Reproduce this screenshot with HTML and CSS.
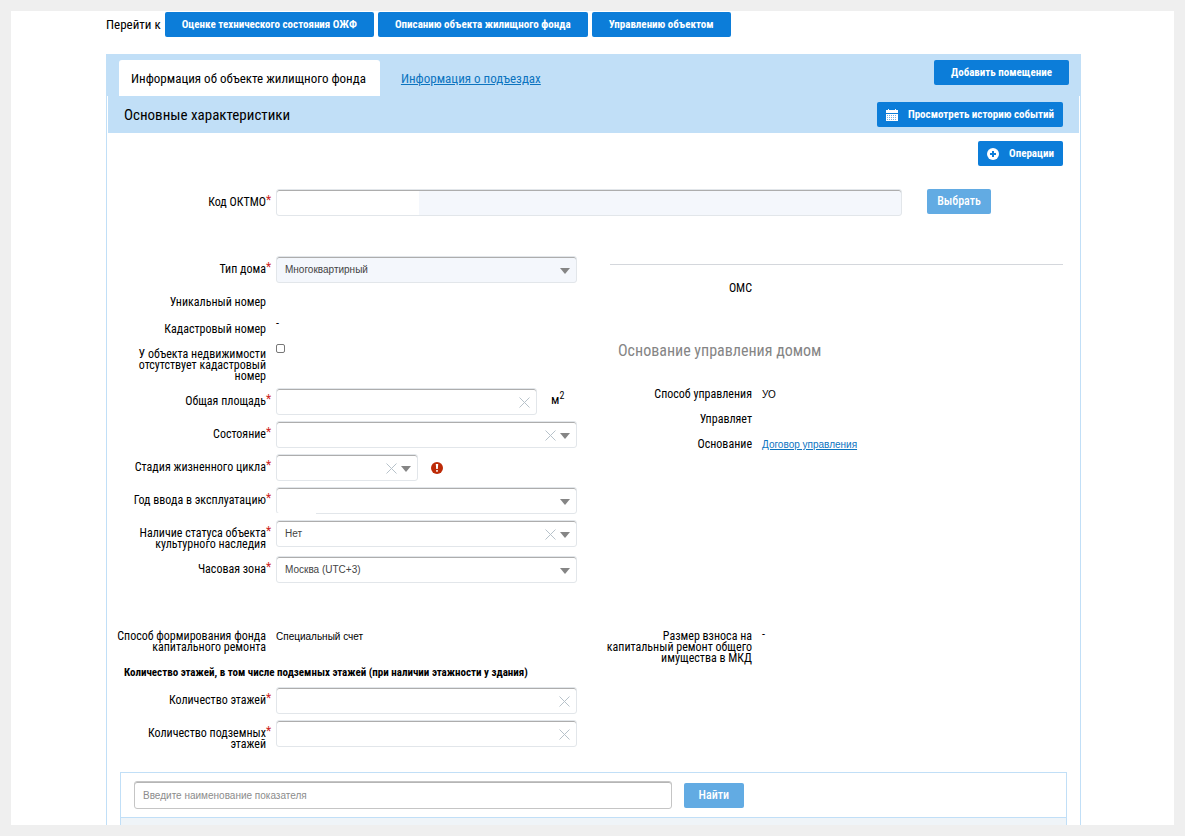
FILE: index.html
```html
<!DOCTYPE html>
<html lang="ru">
<head>
<meta charset="utf-8">
<title>Информация об объекте жилищного фонда</title>
<link rel="stylesheet" href="styles.css">
</head>
<body>
<svg width="0" height="0" class="sprite" aria-hidden="true">
  <symbol id="cross" viewBox="0 0 11 11"><path d="M.5.5l10 10M10.500.5l-10 10" fill="none" stroke="currentColor"/></symbol>
  <symbol id="arrow" viewBox="0 0 10 6"><path d="M0 0h10L5 6z" fill="currentColor"/></symbol>
</svg>
<main class="page">
  <nav class="jump">
    <span class="jump-label">Перейти к</span>
    <button class="btn">Оценке технического состояния ОЖФ</button>
    <button class="btn">Описанию объекта жилищного фонда</button>
    <button class="btn">Управлению объектом</button>
  </nav>
  <section class="panel">
    <div class="tabs">
      <span class="tab active">Информация об объекте жилищного фонда</span>
      <a class="tab" href="#">Информация о подъездах</a>
      <button class="btn push">Добавить помещение</button>
    </div>
    <div class="title-bar">
      <h1>Основные характеристики</h1>
      <button class="btn with-icon">
        <svg width="12" height="12" viewBox="0 0 12 12"><path d="M0 1h12v3H0zM0 5h12v7H0z" fill="#fff"/><path d="M2 0h1v2H2zM9 0h1v2H9z" fill="#fff"/><path d="M1 6.500h10M1 8.500h10M1 10.500h10" stroke="#0c7dd9" stroke-opacity=".6" stroke-dasharray="1 1"/></svg>
        Просмотреть историю событий
      </button>
    </div>
    <form class="content">
      <div class="operations">
        <button type="button" class="btn with-icon">
          <svg width="12" height="12" viewBox="0 0 12 12"><circle cx="6" cy="6" r="6" fill="#fff"/><path d="M6 3v6M3 6h6" stroke="#0c7dd9" stroke-width="2"/></svg>
          Операции
        </button>
      </div>
      <div class="row code-row">
        <label class="label" for="code"><span>Код ОКТМО</span><b>*</b></label>
        <input class="control code" id="code" disabled>
        <button type="button" class="btn pale choose">Выбрать</button>
      </div>
      <div class="columns">
        <div class="rows">
          <div class="row">
            <label class="label" for="type"><span>Тип дома</span><b>*</b></label>
            <div class="field"><select class="control" id="type" disabled><option>Многоквартирный</option></select><span class="tools"><svg class="arrow"><use href="#arrow"/></svg></span></div>
          </div>
          <div class="row text-row"><span class="label"><span>Уникальный номер</span></span></div>
          <div class="row text-row"><span class="label"><span>Кадастровый номер</span></span><span class="dash">-</span></div>
          <div class="row check-row">
            <label class="label" for="nocad"><span>У объекта недвижимости отсутствует кадастровый номер</span></label>
            <input type="checkbox" class="check" id="nocad">
          </div>
          <div class="row">
            <label class="label" for="area"><span>Общая площадь</span><b>*</b></label>
            <div class="field"><input class="control" id="area"><span class="tools"><button type="button" class="clear" aria-label="Очистить"><svg><use href="#cross"/></svg></button></span></div>
            <span class="unit">м<sup>2</sup></span>
          </div>
          <div class="row">
            <label class="label" for="state"><span>Состояние</span><b>*</b></label>
            <div class="field"><select class="control" id="state"><option></option></select><span class="tools"><button type="button" class="clear" aria-label="Очистить"><svg><use href="#cross"/></svg></button><svg class="arrow"><use href="#arrow"/></svg></span></div>
          </div>
          <div class="row">
            <label class="label" for="stage"><span>Стадия жизненного цикла</span><b>*</b></label>
            <div class="field short"><select class="control" id="stage"><option></option></select><span class="tools"><button type="button" class="clear" aria-label="Очистить"><svg><use href="#cross"/></svg></button><svg class="arrow"><use href="#arrow"/></svg></span></div>
            <svg class="alert" width="12" height="12" viewBox="0 0 12 12"><circle cx="6" cy="6" r="6" fill="#bd2a07"/><path d="M4.800 2h2.400L6.800 7H5.200zM5.200 8h1.600v1.700H5.200z" fill="#fff"/></svg>
          </div>
          <div class="row">
            <label class="label" for="year"><span>Год ввода в эксплуатацию</span><b>*</b></label>
            <div class="field year"><select class="control" id="year"><option></option></select><span class="tools"><svg class="arrow"><use href="#arrow"/></svg></span></div>
          </div>
          <div class="row">
            <label class="label" for="heritage"><span>Наличие статуса объекта культурного наследия</span><b>*</b></label>
            <div class="field"><select class="control" id="heritage"><option>Нет</option></select><span class="tools"><button type="button" class="clear" aria-label="Очистить"><svg><use href="#cross"/></svg></button><svg class="arrow"><use href="#arrow"/></svg></span></div>
          </div>
          <div class="row">
            <label class="label" for="zone"><span>Часовая зона</span><b>*</b></label>
            <div class="field"><select class="control" id="zone"><option>Москва (UTC+3)</option></select><span class="tools"><svg class="arrow"><use href="#arrow"/></svg></span></div>
          </div>
        </div>
        <div class="management">
          <div class="row"><span class="label"><span>ОМС</span></span></div>
          <h2>Основание управления домом</h2>
          <div class="row"><span class="label"><span>Способ управления</span></span><span class="value">УО</span></div>
          <div class="row"><span class="label"><span>Управляет</span></span></div>
          <div class="row"><span class="label"><span>Основание</span></span><a class="value" href="#">Договор управления</a></div>
        </div>
      </div>
      <div class="columns repair">
        <div class="row"><span class="label"><span>Способ формирования фонда капитального ремонта</span></span><span class="value">Специальный счет</span></div>
        <div class="row"><span class="label"><span>Размер взноса на капитальный ремонт общего имущества в МКД</span></span><span class="dash">-</span></div>
      </div>
      <h3>Количество этажей, в том числе подземных этажей (при наличии этажности у здания)</h3>
      <div class="columns">
        <div class="rows">
          <div class="row">
            <label class="label" for="floors"><span>Количество этажей</span><b>*</b></label>
            <div class="field"><input class="control" id="floors"><span class="tools"><button type="button" class="clear" aria-label="Очистить"><svg><use href="#cross"/></svg></button></span></div>
          </div>
          <div class="row">
            <label class="label" for="under"><span>Количество подземных этажей</span><b>*</b></label>
            <div class="field"><input class="control" id="under"><span class="tools"><button type="button" class="clear" aria-label="Очистить"><svg><use href="#cross"/></svg></button></span></div>
          </div>
        </div>
      </div>
    </form>
    <div class="finder">
      <div class="finder-bar">
        <input class="search" type="text" placeholder="Введите наименование показателя" aria-label="Введите наименование показателя">
        <button class="btn pale find">Найти</button>
      </div>
      <div class="finder-head"></div>
    </div>
  </section>
</main>
</body>
</html>
```
FILE: styles.css
```css
* { box-sizing: border-box; }
body {
  margin: 0;
  padding: 11px;
  background: #efefef;
  color: #000;
  font: 12px/11px "Roboto Condensed", Roboto, sans-serif;
}
h1, h2, h3 { margin: 0; font-weight: 400; }
a { color: #0c74bf; }
button, input, select { font: inherit; }
.sprite { position: absolute; }
.page { background: #fff; padding: 1px 93px 0 95px; }

.btn {
  height: 25px;
  padding: 0 17px;
  border: 0;
  border-radius: 2px;
  background: #0c7dd9;
  color: #fff;
  font-size: 11px;
  font-weight: 700;
  white-space: nowrap;
}
.btn.pale { background: #62abe3; font-size: 12px; font-weight: 500; }
.btn.with-icon { display: flex; align-items: center; gap: 10px; padding: 0 9px; }

.jump { display: flex; align-items: center; gap: 4px; }
.jump-label { font-size: 13px; line-height: 16px; }

.panel { margin-top: 17px; border: solid #c1dff7; border-width: 0 1px; }
.tabs { display: flex; align-items: flex-start; margin: 0 -1px; padding: 6px 12px 0 13px; background: #c1dff7; }
.tab { padding: 11px 14px 9px 12px; font-size: 13px; line-height: 16px; }
.tab + .tab { margin-left: 9px; }
.tab.active { background: #fff; border-radius: 3px 3px 0 0; }
.push { margin-left: auto; }
.title-bar {
  display: flex;
  align-items: center;
  justify-content: space-between;
  height: 37px;
  margin: 0 1px;
  padding: 0 16px;
  background: #c1dff7;
}
h1 { font-size: 15px; line-height: 18px; }

.content { padding: 8px 17px 0; }
.operations { display: flex; justify-content: flex-end; }
.row { display: flex; align-items: flex-start; }
.label { flex: none; display: flex; width: 152px; padding-top: 8px; text-align: right; }
.label span { flex: none; width: 150px; margin-left: -8px; }
.label b { color: #c22; font-weight: 400; line-height: 6px; }
.control {
  display: block;
  width: 100%;
  height: 27px;
  padding: 0 8px;
  appearance: none;
  border: 1px solid #e2e6ea;
  border-radius: 3px;
  background: #fff;
  box-shadow: inset 0 1px #adadad;
  color: #444;
  font: 10px "Liberation Sans", Arial, sans-serif;
  opacity: 1;
}
.control:disabled { background: #f4f7fc; }
.control.code { flex: 1; background: linear-gradient(#fff, #fff) 0 0 / 142px 100% no-repeat #f4f7fc; }
.code-row { margin-top: 23px; }
.btn.choose { width: 64px; margin: 0 72px 0 25px; padding: 0; }
.field { position: relative; flex: 1; }
.field.short { flex: 0 0 142px; }
.field.year::after { content: ""; position: absolute; left: 0; bottom: 0; width: 40px; height: 1px; background: #fff; }
.tools { position: absolute; right: 7px; top: 1px; height: 100%; display: flex; align-items: center; gap: 4px; pointer-events: none; }
.arrow { width: 10px; height: 6px; color: #858585; }
.clear { width: 11px; height: 11px; padding: 0; border: 0; background: none; color: #b7c2ca; pointer-events: auto; }
.clear svg { display: block; width: 11px; height: 11px; }

.columns { display: grid; grid-template-columns: 1fr 1fr; gap: 33px; }
.code-row + .columns { margin-top: 40px; }
.rows { display: grid; gap: 6px; align-content: start; }
.text-row { min-height: 21px; }
.check-row { min-height: 39px; }
.check-row .label { padding-top: 6px; }
.check { width: 9px; height: 9px; margin: 1px 0 0; appearance: none; border: 1px solid #777; border-radius: 2px; background: #fff; }
.dash { padding-top: 2px; }
.repair .dash { padding-top: 6px; }
.unit { width: 40px; padding: 5px 0 0 14px; line-height: 14px; font-size: 13px; }
.unit sup { font-size: 10px; line-height: 0; }
.alert { margin: 8px 0 0 13px; }

.management { margin-top: 8px; padding-top: 10px; border-top: 1px solid #d4d7dc; }
.management .row { min-height: 25px; }
.value { padding-top: 8px; font: 10px/11px "Liberation Sans", Arial, sans-serif; }
h2 { margin: 41px 0 20px 8px; color: #858585; font-size: 16px; line-height: 20px; }
.repair { margin-top: 40px; }
h3 { margin: 2px 0 7px; font-size: 11px; font-weight: 700; line-height: 14px; }

.finder { margin: 22px 13px 0; border: solid #c1dff7; border-width: 1px 1px 0; }
.finder-bar { display: flex; align-items: center; gap: 12px; padding: 8px 13px; }
.search {
  width: 58.5%;
  height: 28px;
  padding: 0 8px;
  border: 1px solid #c5c5c5;
  border-radius: 3px;
  box-shadow: inset 0 1px #b5b5b5;
  font: 10px "Liberation Sans", Arial, sans-serif;
}
.search::placeholder { color: #8c8c8c; }
.btn.find { padding: 0 15px; }
.finder-head { height: 8px; border-top: 1px solid #c1dff7; background: #eff4f8; }
```
